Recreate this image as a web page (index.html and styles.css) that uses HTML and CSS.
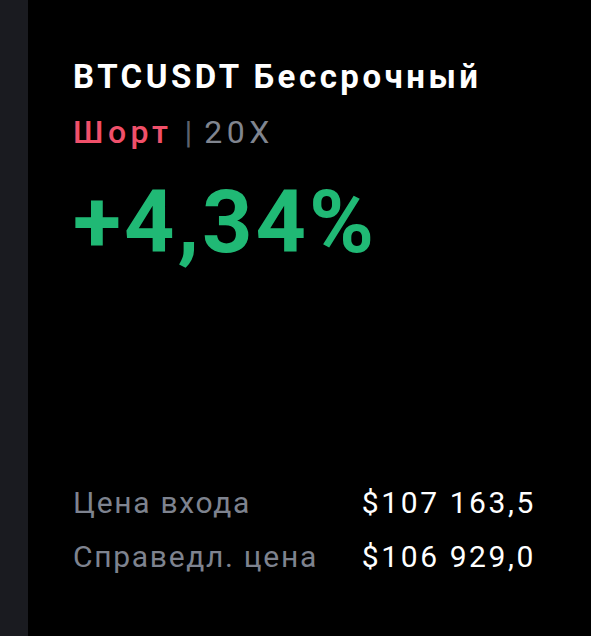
FILE: index.html
```html
<!DOCTYPE html>
<html lang="ru">
<head>
  <meta charset="UTF-8">
  <title>BTCUSDT Бессрочный</title>
  <link rel="stylesheet" href="styles.css">
</head>
<body>
  <div class="screen">
    <div class="side"></div>
    <div class="card">
      <div class="title">BTCUSDT Бессрочный</div>
      <div class="position">
        <span class="short">Шорт</span>
        <span class="sep">|</span>
        <span class="lev">20X</span>
      </div>
      <div class="pnl">+4,34%</div>

      <div class="rows">
        <div class="row">
          <span class="label">Цена входа</span>
          <span class="value">$107 163,5</span>
        </div>
        <div class="row">
          <span class="label">Справедл. цена</span>
          <span class="value">$106 929,0</span>
        </div>
      </div>
    </div>
  </div>
</body>
</html>
```

FILE: styles.css
```css
body {
  margin: 0;
  background: #000;
  font-family: Roboto, "Liberation Sans", sans-serif;
}
.screen {
  display: flex;
  height: 636px;
}
.side {
  width: 28px;
  background: #1a1b20;
}
.card {
  flex: 1;
  display: flex;
  flex-direction: column;
  padding: 57px 55px 0 45px;
}
.title {
  color: #fff;
  font-size: 33px;
  font-weight: 700;
  line-height: 40px;
  letter-spacing: 3.5px;
}
.position {
  margin-top: 15px;
  font-size: 32px;
  line-height: 40px;
  display: flex;
  align-items: baseline;
  gap: 12px;
  letter-spacing: 4.5px;
}
.short {
  color: #f0506a;
  font-weight: 500;
}
.sep {
  color: #5d626c;
  letter-spacing: 0;
}
.lev {
  color: #80858f;
}
.pnl {
  margin-top: 20px;
  color: #20b975;
  font-size: 88px;
  font-weight: 700;
  line-height: 100px;
  letter-spacing: 3px;
}
.rows {
  margin-top: 204px;
}
.row {
  display: flex;
  justify-content: space-between;
  font-size: 30px;
  line-height: 54px;
}
.label {
  color: #7e838f;
  letter-spacing: 1.7px;
}
.value {
  color: #fff;
  letter-spacing: 2.6px;
}
```
